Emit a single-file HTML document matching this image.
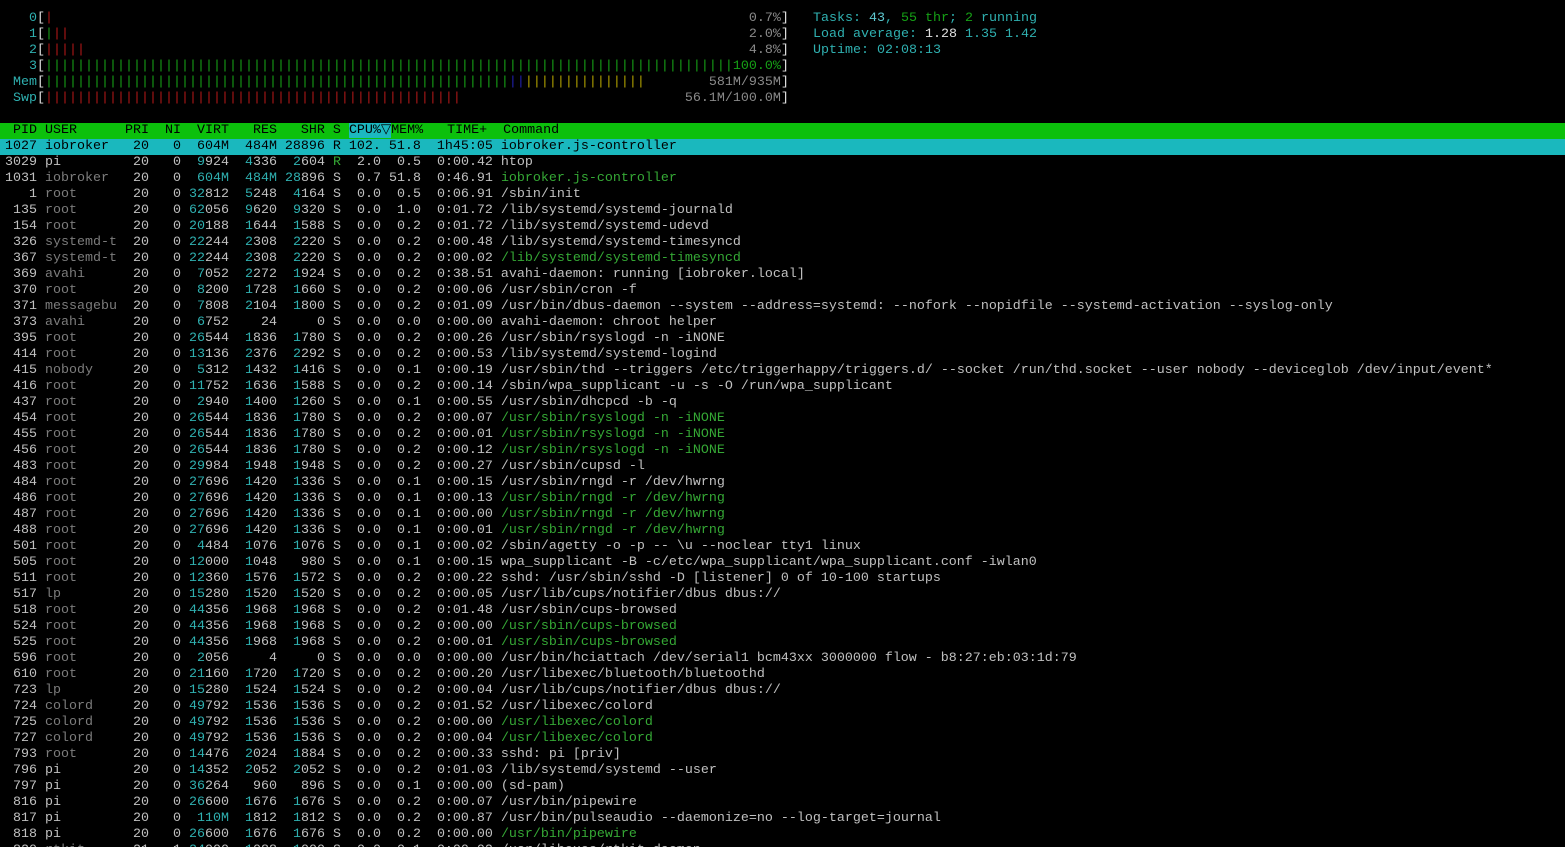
<!DOCTYPE html>
<html><head><meta charset="utf-8"><style>
html,body{margin:0;padding:0;background:#000;width:1565px;height:847px;overflow:hidden}
body{font-family:"Liberation Mono",monospace;font-size:13.33px;line-height:16px;color:#c0c0c0}
#w{padding-top:11px;position:relative}
.l{height:16px;padding-left:5px;white-space:pre}
i{font-style:normal;color:#2fb0b0}
b{font-weight:normal;color:#7c7c7c}
s{text-decoration:none;color:#35a835}
.r{color:#b01818}.g{color:#16a016}.bl{color:#2020b0}.y{color:#b0a000}.lab{color:#2fb0b0}.dv{color:#8a8a8a}.wh{color:#e0e0e0}
.hd{background:#0cc00c;color:#000}
.hd em{font-style:normal;background:#1cb8c0}
.sel{background:#1ab8be;color:#000}
#rt{position:absolute;left:813px;top:11px;white-space:pre}
</style></head><body><div id="w">
<div class="l"><span class="lab">   0</span><span class="wh">[</span><span class="r">|</span>                                                                                       <span class="dv">0.7%</span><span class="wh">]</span></div>
<div class="l"><span class="lab">   1</span><span class="wh">[</span><span class="g">|</span><span class="r">||</span>                                                                                     <span class="dv">2.0%</span><span class="wh">]</span></div>
<div class="l"><span class="lab">   2</span><span class="wh">[</span><span class="r">|||||</span>                                                                                   <span class="dv">4.8%</span><span class="wh">]</span></div>
<div class="l"><span class="lab">   3</span><span class="wh">[</span><span class="g">||||||||||||||||||||||||||||||||||||||||||||||||||||||||||||||||||||||||||||||||||||||100.0%</span><span class="wh">]</span></div>
<div class="l"><span class="lab"> Mem</span><span class="wh">[</span><span class="g">||||||||||||||||||||||||||||||||||||||||||||||||||||||||||</span><span class="bl">||</span><span class="y">|||||||||||||||</span>        <span class="dv">581M/935M</span><span class="wh">]</span></div>
<div class="l"><span class="lab"> Swp</span><span class="wh">[</span><span class="r">||||||||||||||||||||||||||||||||||||||||||||||||||||</span>                            <span class="dv">56.1M/100.0M</span><span class="wh">]</span></div>
<div class="l"> </div>
<div class="l hd"> PID USER      PRI  NI  VIRT   RES   SHR S <em>CPU%▽</em>MEM%   TIME+  Command</div>
<div class="l sel">1027 iobroker   20   0  604M  484M 28896 R 102. 51.8  1h45:05 iobroker.js-controller</div>
<div class="l">3029 pi         20   0  <i>9</i>924  <i>4</i>336  <i>2</i>604 <s>R</s>  2.0  0.5  0:00.42 htop</div>
<div class="l">1031 <b>iobroker </b>  20   0  <i>604M</i>  <i>484M</i> <i>28</i>896 S  0.7 51.8  0:46.91 <s>iobroker.js-controller</s></div>
<div class="l">   1 <b>root     </b>  20   0 <i>32</i>812  <i>5</i>248  <i>4</i>164 S  0.0  0.5  0:06.91 /sbin/init</div>
<div class="l"> 135 <b>root     </b>  20   0 <i>62</i>056  <i>9</i>620  <i>9</i>320 S  0.0  1.0  0:01.72 /lib/systemd/systemd-journald</div>
<div class="l"> 154 <b>root     </b>  20   0 <i>20</i>188  <i>1</i>644  <i>1</i>588 S  0.0  0.2  0:01.72 /lib/systemd/systemd-udevd</div>
<div class="l"> 326 <b>systemd-t</b>  20   0 <i>22</i>244  <i>2</i>308  <i>2</i>220 S  0.0  0.2  0:00.48 /lib/systemd/systemd-timesyncd</div>
<div class="l"> 367 <b>systemd-t</b>  20   0 <i>22</i>244  <i>2</i>308  <i>2</i>220 S  0.0  0.2  0:00.02 <s>/lib/systemd/systemd-timesyncd</s></div>
<div class="l"> 369 <b>avahi    </b>  20   0  <i>7</i>052  <i>2</i>272  <i>1</i>924 S  0.0  0.2  0:38.51 avahi-daemon: running [iobroker.local]</div>
<div class="l"> 370 <b>root     </b>  20   0  <i>8</i>200  <i>1</i>728  <i>1</i>660 S  0.0  0.2  0:00.06 /usr/sbin/cron -f</div>
<div class="l"> 371 <b>messagebu</b>  20   0  <i>7</i>808  <i>2</i>104  <i>1</i>800 S  0.0  0.2  0:01.09 /usr/bin/dbus-daemon --system --address=systemd: --nofork --nopidfile --systemd-activation --syslog-only</div>
<div class="l"> 373 <b>avahi    </b>  20   0  <i>6</i>752    24     0 S  0.0  0.0  0:00.00 avahi-daemon: chroot helper</div>
<div class="l"> 395 <b>root     </b>  20   0 <i>26</i>544  <i>1</i>836  <i>1</i>780 S  0.0  0.2  0:00.26 /usr/sbin/rsyslogd -n -iNONE</div>
<div class="l"> 414 <b>root     </b>  20   0 <i>13</i>136  <i>2</i>376  <i>2</i>292 S  0.0  0.2  0:00.53 /lib/systemd/systemd-logind</div>
<div class="l"> 415 <b>nobody   </b>  20   0  <i>5</i>312  <i>1</i>432  <i>1</i>416 S  0.0  0.1  0:00.19 /usr/sbin/thd --triggers /etc/triggerhappy/triggers.d/ --socket /run/thd.socket --user nobody --deviceglob /dev/input/event*</div>
<div class="l"> 416 <b>root     </b>  20   0 <i>11</i>752  <i>1</i>636  <i>1</i>588 S  0.0  0.2  0:00.14 /sbin/wpa_supplicant -u -s -O /run/wpa_supplicant</div>
<div class="l"> 437 <b>root     </b>  20   0  <i>2</i>940  <i>1</i>400  <i>1</i>260 S  0.0  0.1  0:00.55 /usr/sbin/dhcpcd -b -q</div>
<div class="l"> 454 <b>root     </b>  20   0 <i>26</i>544  <i>1</i>836  <i>1</i>780 S  0.0  0.2  0:00.07 <s>/usr/sbin/rsyslogd -n -iNONE</s></div>
<div class="l"> 455 <b>root     </b>  20   0 <i>26</i>544  <i>1</i>836  <i>1</i>780 S  0.0  0.2  0:00.01 <s>/usr/sbin/rsyslogd -n -iNONE</s></div>
<div class="l"> 456 <b>root     </b>  20   0 <i>26</i>544  <i>1</i>836  <i>1</i>780 S  0.0  0.2  0:00.12 <s>/usr/sbin/rsyslogd -n -iNONE</s></div>
<div class="l"> 483 <b>root     </b>  20   0 <i>29</i>984  <i>1</i>948  <i>1</i>948 S  0.0  0.2  0:00.27 /usr/sbin/cupsd -l</div>
<div class="l"> 484 <b>root     </b>  20   0 <i>27</i>696  <i>1</i>420  <i>1</i>336 S  0.0  0.1  0:00.15 /usr/sbin/rngd -r /dev/hwrng</div>
<div class="l"> 486 <b>root     </b>  20   0 <i>27</i>696  <i>1</i>420  <i>1</i>336 S  0.0  0.1  0:00.13 <s>/usr/sbin/rngd -r /dev/hwrng</s></div>
<div class="l"> 487 <b>root     </b>  20   0 <i>27</i>696  <i>1</i>420  <i>1</i>336 S  0.0  0.1  0:00.00 <s>/usr/sbin/rngd -r /dev/hwrng</s></div>
<div class="l"> 488 <b>root     </b>  20   0 <i>27</i>696  <i>1</i>420  <i>1</i>336 S  0.0  0.1  0:00.01 <s>/usr/sbin/rngd -r /dev/hwrng</s></div>
<div class="l"> 501 <b>root     </b>  20   0  <i>4</i>484  <i>1</i>076  <i>1</i>076 S  0.0  0.1  0:00.02 /sbin/agetty -o -p -- \u --noclear tty1 linux</div>
<div class="l"> 505 <b>root     </b>  20   0 <i>12</i>000  <i>1</i>048   980 S  0.0  0.1  0:00.15 wpa_supplicant -B -c/etc/wpa_supplicant/wpa_supplicant.conf -iwlan0</div>
<div class="l"> 511 <b>root     </b>  20   0 <i>12</i>360  <i>1</i>576  <i>1</i>572 S  0.0  0.2  0:00.22 sshd: /usr/sbin/sshd -D [listener] 0 of 10-100 startups</div>
<div class="l"> 517 <b>lp       </b>  20   0 <i>15</i>280  <i>1</i>520  <i>1</i>520 S  0.0  0.2  0:00.05 /usr/lib/cups/notifier/dbus dbus://</div>
<div class="l"> 518 <b>root     </b>  20   0 <i>44</i>356  <i>1</i>968  <i>1</i>968 S  0.0  0.2  0:01.48 /usr/sbin/cups-browsed</div>
<div class="l"> 524 <b>root     </b>  20   0 <i>44</i>356  <i>1</i>968  <i>1</i>968 S  0.0  0.2  0:00.00 <s>/usr/sbin/cups-browsed</s></div>
<div class="l"> 525 <b>root     </b>  20   0 <i>44</i>356  <i>1</i>968  <i>1</i>968 S  0.0  0.2  0:00.01 <s>/usr/sbin/cups-browsed</s></div>
<div class="l"> 596 <b>root     </b>  20   0  <i>2</i>056     4     0 S  0.0  0.0  0:00.00 /usr/bin/hciattach /dev/serial1 bcm43xx 3000000 flow - b8:27:eb:03:1d:79</div>
<div class="l"> 610 <b>root     </b>  20   0 <i>21</i>160  <i>1</i>720  <i>1</i>720 S  0.0  0.2  0:00.20 /usr/libexec/bluetooth/bluetoothd</div>
<div class="l"> 723 <b>lp       </b>  20   0 <i>15</i>280  <i>1</i>524  <i>1</i>524 S  0.0  0.2  0:00.04 /usr/lib/cups/notifier/dbus dbus://</div>
<div class="l"> 724 <b>colord   </b>  20   0 <i>49</i>792  <i>1</i>536  <i>1</i>536 S  0.0  0.2  0:01.52 /usr/libexec/colord</div>
<div class="l"> 725 <b>colord   </b>  20   0 <i>49</i>792  <i>1</i>536  <i>1</i>536 S  0.0  0.2  0:00.00 <s>/usr/libexec/colord</s></div>
<div class="l"> 727 <b>colord   </b>  20   0 <i>49</i>792  <i>1</i>536  <i>1</i>536 S  0.0  0.2  0:00.04 <s>/usr/libexec/colord</s></div>
<div class="l"> 793 <b>root     </b>  20   0 <i>14</i>476  <i>2</i>024  <i>1</i>884 S  0.0  0.2  0:00.33 sshd: pi [priv]</div>
<div class="l"> 796 pi         20   0 <i>14</i>352  <i>2</i>052  <i>2</i>052 S  0.0  0.2  0:01.03 /lib/systemd/systemd --user</div>
<div class="l"> 797 pi         20   0 <i>36</i>264   960   896 S  0.0  0.1  0:00.00 (sd-pam)</div>
<div class="l"> 816 pi         20   0 <i>26</i>600  <i>1</i>676  <i>1</i>676 S  0.0  0.2  0:00.07 /usr/bin/pipewire</div>
<div class="l"> 817 pi         20   0  <i>110M</i>  <i>1</i>812  <i>1</i>812 S  0.0  0.2  0:00.87 /usr/bin/pulseaudio --daemonize=no --log-target=journal</div>
<div class="l"> 818 pi         20   0 <i>26</i>600  <i>1</i>676  <i>1</i>676 S  0.0  0.2  0:00.00 <s>/usr/bin/pipewire</s></div>
<div class="l"> 820 <b>rtkit    </b>  21   1 <i>24</i>000  <i>1</i>088  <i>1</i>000 S  0.0  0.1  0:00.02 /usr/libexec/rtkit-daemon</div>
<div id="rt"><span class="lab">Tasks: </span><span style="color:#5ec8d0">43</span><span class="lab">, </span><span class="g">55 thr</span><span class="lab">; </span><span class="g">2</span><span class="lab"> running</span>
<span class="lab">Load average: </span><span class="wh">1.28 </span><span class="lab">1.35 1.42</span>
<span class="lab">Uptime: 02:08:13</span></div>
</div></body></html>
